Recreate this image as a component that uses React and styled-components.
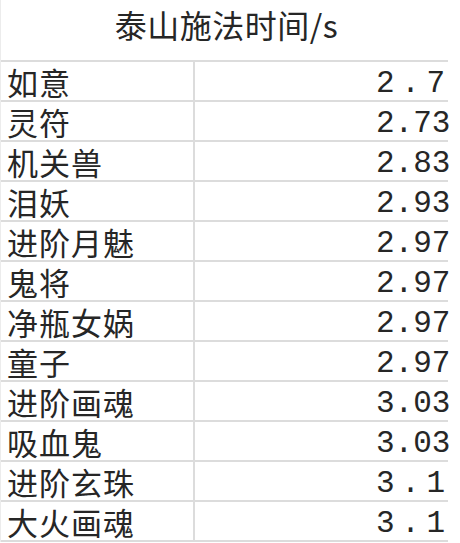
import React from "react";
import styled, { createGlobalStyle } from "styled-components";

const Global = createGlobalStyle`
  html, body { margin: 0; padding: 0; background: #ffffff; }
  body { font-family: "Noto Sans CJK SC", "Noto Sans", sans-serif; }
`;

const Sheet = styled.div`
  width: 447px;
  display: flex;
  flex-direction: column;
  border-left: 1px solid #ececec;
  color: #262626;
`;

const Title = styled.div`
  height: 62px;
  box-sizing: border-box;
  border-bottom: 2px solid #dcdcdc;
  display: flex;
  align-items: flex-start;
  justify-content: center;
  padding-top: 7px;
  padding-left: 4px;
  font-size: 32px;
  line-height: 1.1;
  font-family: "Noto Sans CJK SC", sans-serif;
  font-weight: 400;
  letter-spacing: 0.5px;
`;

const Row = styled.div`
  display: grid;
  grid-template-columns: 194px 1fr;
  height: 40px;
  box-sizing: border-box;
  border-bottom: 2px solid #dcdcdc;
`;

const Name = styled.div`
  display: flex;
  align-items: center;
  padding-left: 6px;
  border-right: 2px solid #dcdcdc;
  font-size: 31px;
  letter-spacing: 1px;
  line-height: 1;
  font-family: "Noto Sans CJK SC", sans-serif;
  white-space: nowrap;
`;

const Value = styled.div`
  display: flex;
  align-items: center;
  justify-content: flex-end;
  padding-right: 3px;
  padding-top: 4px;
`;

const Num = styled.div`
  width: 69px;
  display: flex;
  justify-content: space-between;
  font-family: "Liberation Mono", "DejaVu Sans Mono", monospace;
  font-size: 31px;
  line-height: 1;
`;

const data = [
  ["如意", "2.7"],
  ["灵符", "2.73"],
  ["机关兽", "2.83"],
  ["泪妖", "2.93"],
  ["进阶月魅", "2.97"],
  ["鬼将", "2.97"],
  ["净瓶女娲", "2.97"],
  ["童子", "2.97"],
  ["进阶画魂", "3.03"],
  ["吸血鬼", "3.03"],
  ["进阶玄珠", "3.1"],
  ["大火画魂", "3.1"],
];

export default function App() {
  return (
    <>
      <Global />
      <Sheet>
        <Title>泰山施法时间/s</Title>
        {data.map(([n, v], i) => (
          <Row key={i}>
            <Name>{n}</Name>
            <Value>
              <Num>
                {v.split("").map((c, j) => (
                  <span key={j}>{c}</span>
                ))}
              </Num>
            </Value>
          </Row>
        ))}
      </Sheet>
    </>
  );
}
